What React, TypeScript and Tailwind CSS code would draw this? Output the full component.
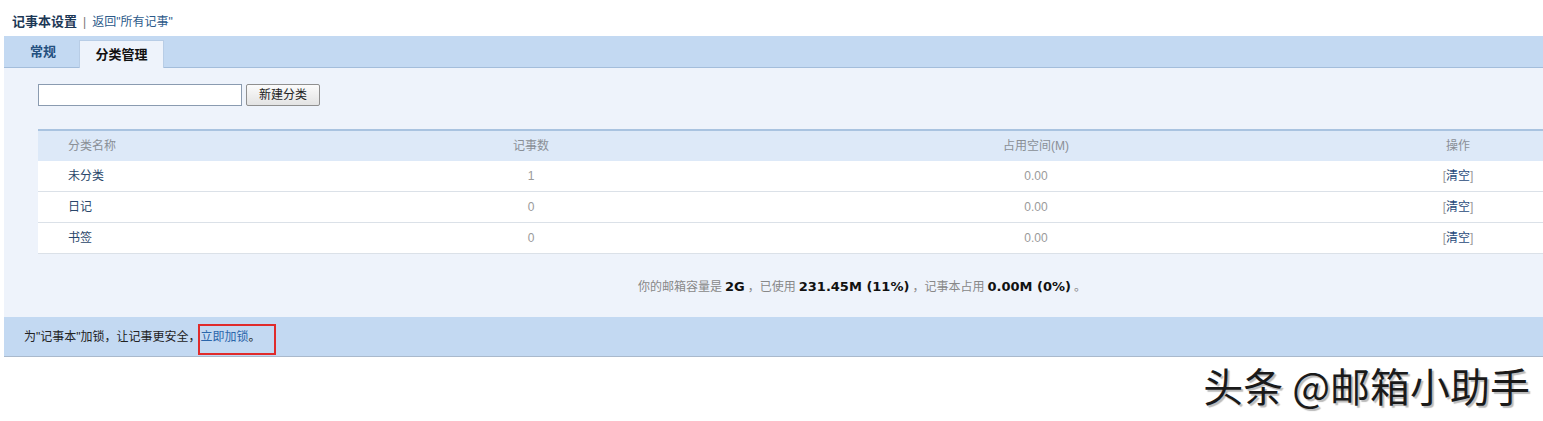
import React from "react";

const rows = [
  { name: "未分类", count: "1", size: "0.00" },
  { name: "日记", count: "0", size: "0.00" },
  { name: "书签", count: "0", size: "0.00" },
];

const cols = "grid grid-cols-[342px_302px_708px_136px_1fr] items-center";

export default function App() {
  return (
    <div className="w-[1543px] h-[421px] bg-white font-['Liberation_Sans','Noto_Sans_CJK_SC',sans-serif] text-[12px] text-[#333] overflow-hidden">
      {/* header line */}
      <div className="h-[36px] flex items-center pl-[12px] pt-[8px]">
        <span className="text-[13px] font-bold text-[#1d3856]">记事本设置</span>
        <span className="mx-[6px] text-[#777]">|</span>
        <a className="text-[#2c5a8a]">返回"所有记事"</a>
      </div>

      <div className="ml-[4px]">
        {/* tabs */}
        <div className="h-[32px] bg-[#c3d9f2] border-b border-[#a3bddb] flex items-end pl-[26px]">
          <div className="w-[49px] h-[31px] flex items-center text-[13px] font-bold text-[#24507f]">常规</div>
          <div className="w-[85px] h-[28px] -mb-px bg-[#eef3fb] border border-b-0 border-[#b8cde6] flex items-center justify-center text-[13px] font-bold text-[#111]">
            分类管理
          </div>
        </div>

        {/* content */}
        <div className="bg-[#eef3fb] pt-[16px] h-[249px]">
          <div className="flex items-center gap-[4px] pl-[34px]">
            <input className="w-[204px] h-[22px] bg-white border border-[#8a9bb0] outline-none" />
            <button className="w-[74px] h-[22px] rounded-[2px] border border-[#8f8f8f] bg-gradient-to-b from-[#fbfbfb] to-[#e3e3e3] text-[12px] text-[#222]">
              新建分类
            </button>
          </div>

          <div className="ml-[34px] mt-[23px] border-t-2 border-[#a9c3e0]">
            <div className={`${cols} h-[30px] bg-[#dde9f8] text-[#8a8f96]`}>
              <div className="pl-[30px]">分类名称</div>
              <div className="text-center">记事数</div>
              <div className="text-center">占用空间(M)</div>
              <div className="text-center">操作</div>
              <div />
            </div>
            {rows.map((r) => (
              <div key={r.name} className={`${cols} h-[31px] bg-white border-b border-[#dbe1e8]`}>
                <div className="pl-[30px] text-[#2a466a]">{r.name}</div>
                <div className="text-center text-[#9a9a9a]">{r.count}</div>
                <div className="text-center text-[#9a9a9a]">{r.size}</div>
                <div className="text-center text-[#1f4a7a]">
                  <span className="text-[#999]">[</span>清空<span className="text-[#999]">]</span>
                </div>
                <div />
              </div>
            ))}
          </div>

          <div className="mt-[23px] pl-[634px] text-[#888] flex items-center gap-[3px]">
            <span>你的邮箱容量是</span>
            <b className="text-[13px] text-[#111] font-['DejaVu_Sans',sans-serif]">2G</b>
            <span>，已使用</span>
            <b className="text-[13px] text-[#111] font-['DejaVu_Sans',sans-serif]">231.45M (11%)</b>
            <span>，记事本占用</span>
            <b className="text-[13px] text-[#111] font-['DejaVu_Sans',sans-serif]">0.00M (0%)</b>
            <span>。</span>
          </div>
        </div>

        {/* lock bar */}
        <div className="h-[40px] bg-[#c3d9f2] border-b border-[#a9b9cc] flex items-center pl-[20px] text-[#222]">
          <span>为"记事本"加锁，让记事更安全，</span>
          <span className="relative">
            <a className="text-[#2b66ab]">立即加锁</a>。
            <span className="absolute -left-[3px] -top-[4px] w-[78px] h-[31px] border-2 border-[#e02b2b]" />
          </span>
        </div>
      </div>

      {/* watermark */}
      <div className="flex justify-end pr-[13px] pt-[3px]">
        <span className="text-[40px] leading-[50px] text-[#1a1a1a] font-['Noto_Sans_CJK_SC',sans-serif] [text-shadow:2px_2px_1px_#bbb]">
          头条 @邮箱小助手
        </span>
      </div>
    </div>
  );
}
